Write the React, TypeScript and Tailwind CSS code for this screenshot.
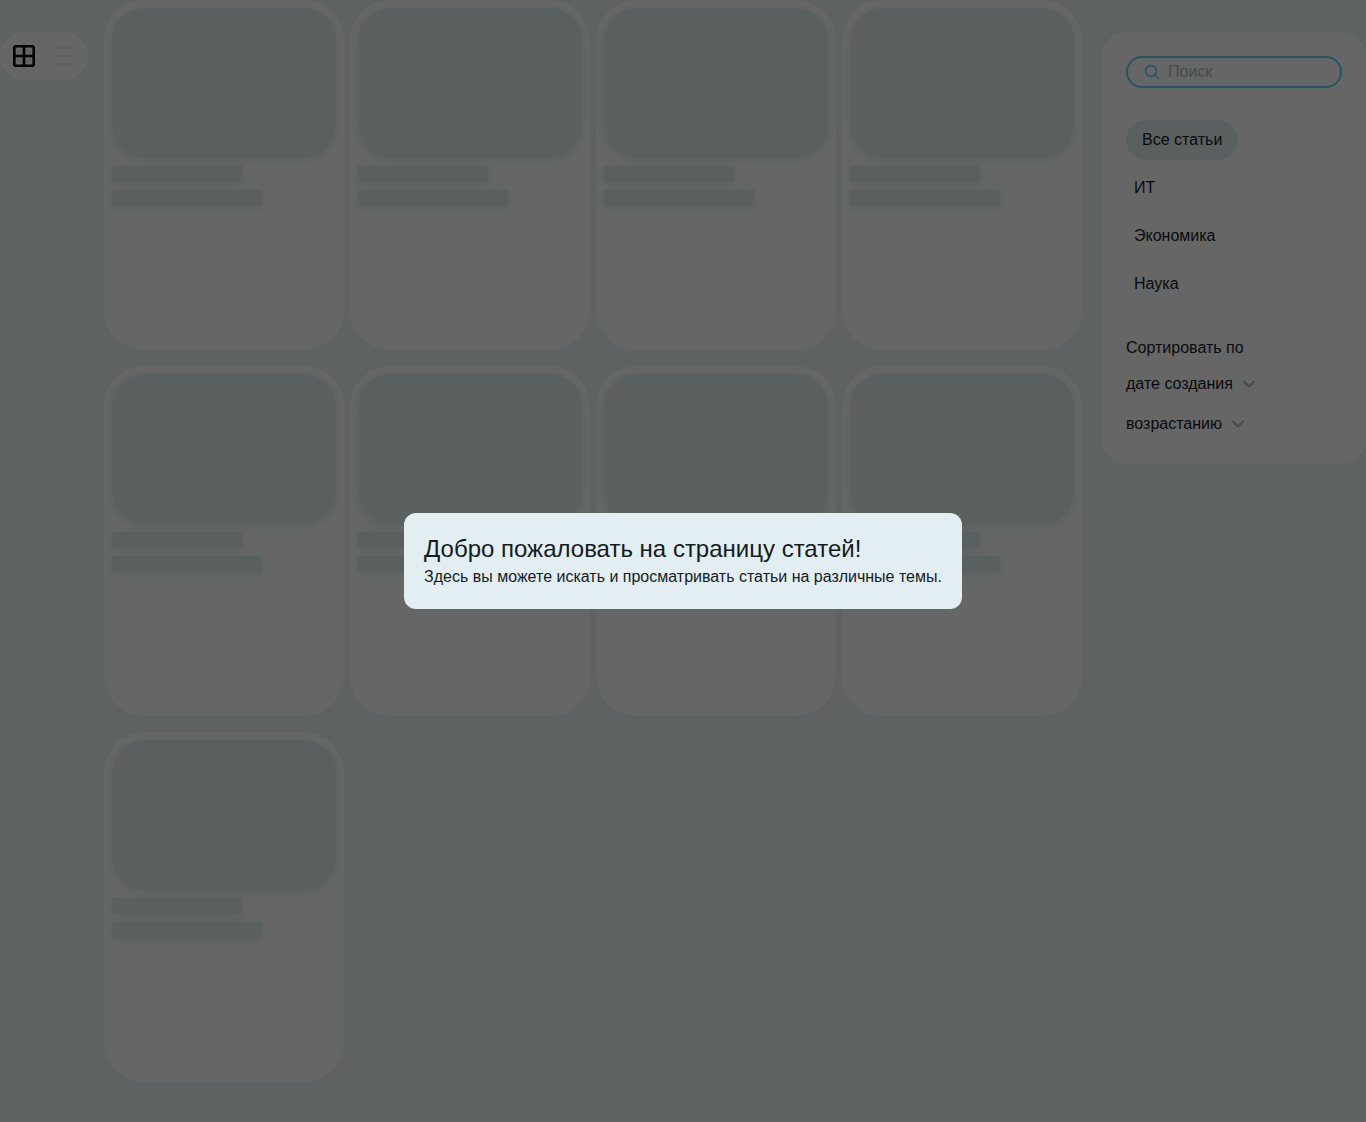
import React from 'react';

const categories = ['Все статьи', 'ИТ', 'Экономика', 'Наука'];

function ViewSelector() {
  return (
    <div className="mt-8 flex h-12 w-22 shrink-0 items-center gap-4 rounded-full bg-white px-3">
      <button type="button" aria-label="Плитка" className="size-6">
        <svg viewBox="0 0 24 24" className="size-6" fill="none" stroke="#000" strokeWidth="2.6">
          <rect x="2.3" y="2.3" width="19.4" height="19.4" rx="1.8" />
          <path d="M12 2v20M2 12h20" />
        </svg>
      </button>
      <button type="button" aria-label="Список" className="size-6">
        <svg viewBox="0 0 24 24" className="size-6" fill="none" stroke="#ecf4f6" strokeWidth="2">
          <path d="M1 4h22M1 12h22M1 20h22" />
        </svg>
      </button>
    </div>
  );
}

function SkeletonCard() {
  return (
    <div className="flex h-[350px] flex-col gap-2 overflow-hidden rounded-[40px] bg-white p-2">
      <div className="h-[150px] shrink-0 rounded-[32px] bg-linear-to-r from-[#e6eff1] to-[#e2eef1] to-[24px] shadow-[0_2px_10px_0_#e2eef1]" />
      <div className="h-4 w-[130px] shrink-0 bg-[#e2eef1] shadow-[0_2px_10px_0_#e2eef1]" />
      <div className="h-4 w-[150px] shrink-0 bg-[#e2eef1] shadow-[0_2px_10px_0_#e2eef1]" />
    </div>
  );
}

function SortButton({ label }: { label: string }) {
  return (
    <button type="button" className="flex h-6 items-center gap-2">
      {label}
      <svg viewBox="0 0 16 16" className="size-4" fill="none" stroke="#adbcc0" strokeWidth="2" strokeLinecap="round" strokeLinejoin="round">
        <path d="M3 5.5l5 5 5-5" />
      </svg>
    </button>
  );
}

function Filters() {
  return (
    <aside className="mt-8 w-66 shrink-0 rounded-3xl bg-white p-6 pb-7">
      <label className="flex h-8 items-center gap-2 rounded-full border-2 border-[#5ed3f3] px-4">
        <svg viewBox="0 0 16 16" className="size-4 shrink-0" fill="none" stroke="#5ed3f3" strokeWidth="1.6" strokeLinecap="round">
          <circle cx="7" cy="7" r="5.4" />
          <path d="M11 11l3.4 3.4" />
        </svg>
        <input type="text" aria-label="Поиск" placeholder="Поиск" className="w-full min-w-0 bg-transparent outline-none placeholder:text-[#adbcc0]" />
      </label>
      <div className="mt-8 flex flex-col items-start gap-2">
        {categories.map((name, i) => (
          <button
            key={name}
            type="button"
            className={i === 0 ? 'h-10 rounded-[20px] bg-[#e2eef1] px-4' : 'h-10 px-2'}
          >
            {name}
          </button>
        ))}
      </div>
      <div className="mt-8 flex flex-col items-start">
        <p>Сортировать по</p>
        <div className="mt-3 flex flex-col items-start gap-4">
          <SortButton label="дате создания" />
          <SortButton label="возрастанию" />
        </div>
      </div>
    </aside>
  );
}

export default function App() {
  return (
    <div className="min-h-screen bg-[#ecf4f6] font-['Liberation_Sans',Arial,sans-serif] text-base text-[#141c1f]">
      <div className="flex items-start gap-4 pb-10">
        <ViewSelector />
        <main className="grid min-w-0 flex-1 grid-cols-[repeat(auto-fill,240px)] gap-x-1.5 gap-y-4">
          {Array.from({ length: 9 }, (_, i) => (
            <SkeletonCard key={i} />
          ))}
        </main>
        <Filters />
      </div>
      <div className="fixed inset-0 flex items-center justify-center bg-black/60">
        <div role="dialog" aria-modal="true" aria-labelledby="welcome-title" className="rounded-xl bg-[#e2eef1] p-5">
          <h1 id="welcome-title" className="text-2xl">Добро пожаловать на страницу статей!</h1>
          <p>Здесь вы можете искать и просматривать статьи на различные темы.</p>
        </div>
      </div>
    </div>
  );
}
